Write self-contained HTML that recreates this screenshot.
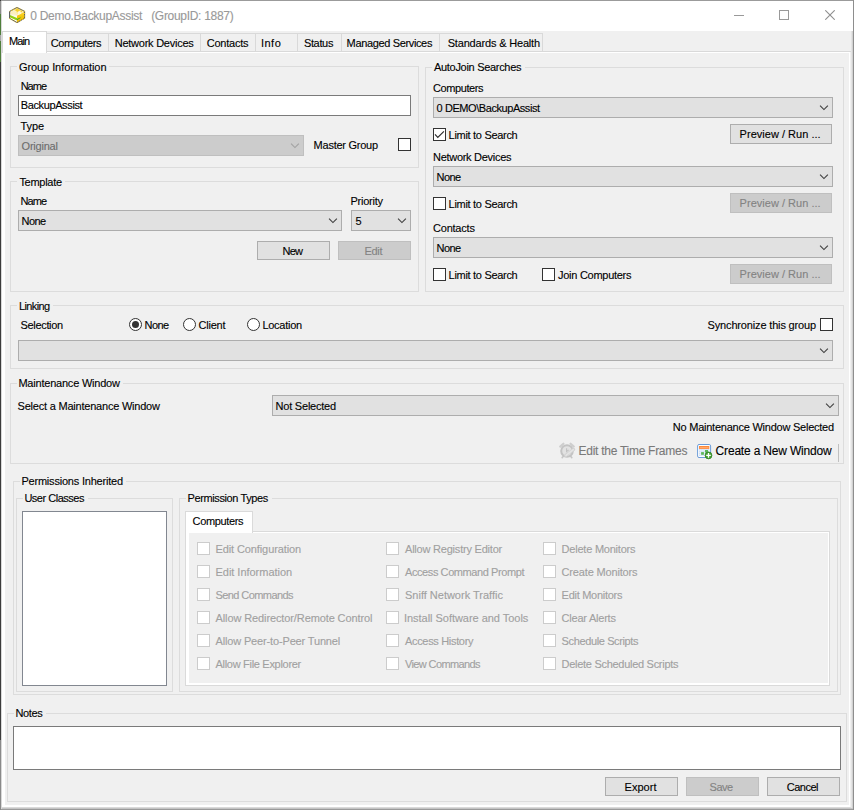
<!DOCTYPE html>
<html>
<head>
<meta charset="utf-8">
<title>0 Demo.BackupAssist (GroupID: 1887)</title>
<style>
html,body{margin:0;padding:0;}
body{width:854px;height:810px;overflow:hidden;position:relative;background:#f0f0f0;font-family:"Liberation Sans",sans-serif;font-size:11px;color:#000;}
.a{position:absolute;}
.t{position:absolute;white-space:pre;font-size:11px;line-height:13px;height:13px;-webkit-text-stroke:0.12px currentColor;}
.t.b{font-size:12px;line-height:16px;height:16px;}
.gb{position:absolute;border:1px solid #dcdcdc;box-sizing:border-box;}
.inp{position:absolute;box-sizing:border-box;background:#fff;border:1px solid #7a7a7a;}
.cb{position:absolute;box-sizing:border-box;height:21px;background:#e1e1e1;border:1px solid #adadad;}
.cb.dis{background:#cccccc;border-color:#bfbfbf;}
.ar{position:absolute;right:3px;top:7px;}
.btn{position:absolute;box-sizing:border-box;background:#e1e1e1;border:1px solid #adadad;}
.btn.dis{background:#cccccc;border-color:#bfbfbf;}
.ck{position:absolute;box-sizing:border-box;width:13px;height:13px;background:#fff;border:1px solid #333;}
.ck.dis{border-color:#cccccc;background:#fff;}
.rd{position:absolute;box-sizing:border-box;width:13px;height:13px;background:#fff;border:1px solid #333;border-radius:50%;}
.dot{position:absolute;left:2px;top:2px;width:7px;height:7px;border-radius:50%;background:#333;}
</style>
</head>
<body>
<!-- window chrome -->
<div class="a" style="left:0px;top:0px;width:854px;height:810px;background:#f0f0f0;"></div>
<div class="a" style="left:1px;top:1px;width:852px;height:30px;background:#fff;"></div>
<div class="a" style="left:0px;top:0px;width:854px;height:1px;background:#9b9b9b;"></div>
<svg class="a" style="left:4px;top:4px;" width="30" height="24" viewBox="4 4 30 24">
<defs>
<linearGradient id="lf" x1="0" y1="0" x2="0" y2="1"><stop offset="0" stop-color="#f7e3a4"/><stop offset="0.45" stop-color="#fffbee"/><stop offset="1" stop-color="#ffffff"/></linearGradient>
<linearGradient id="rf" x1="0" y1="0" x2="0" y2="1"><stop offset="0" stop-color="#fbd84a"/><stop offset="0.45" stop-color="#f9c707"/><stop offset="1" stop-color="#f5bc00"/></linearGradient>
</defs>
<polygon points="17,7.5 24.6,11.4 24.6,18.3 17,22.6 9.6,18.3 9.6,11.4" fill="#fdf2c4"/>
<polygon points="9.7,11.6 17,15.4 17,22.4 9.7,18.2" fill="url(#lf)"/>
<polygon points="17,15.4 24.6,11.6 24.6,18.2 17,22.4" fill="url(#rf)"/>
<polygon points="17,7.8 24.4,11.5 17,15.4 9.6,11.5" fill="#fdf0bd"/>
<polygon points="14.5,10 17.5,8.6 20.6,10.4 22.6,11.6 17.3,14.6 16.6,11.2" fill="#f7d12c"/>
<polygon points="17.3,12 20.2,10.6 21.4,13.8 17.3,15.2" fill="#fff6d8"/>
<polygon points="9.9,15.0 17,18.1 17,20.4 9.9,17.2" fill="#93d012"/>
<polygon points="17,18.2 24.2,15.0 24.2,16.0 17,20.2" fill="#e8c81a"/>
<polygon points="17,19.0 20.6,17.3 20.6,18.0 17,20.2" fill="#34b51c"/>
<polygon points="17,7.5 24.6,11.4 24.6,18.3 17,22.6 9.6,18.3 9.6,11.4" fill="none" stroke="#50535a" stroke-width="1"/>
<path d="M9.6 18.3 L17 22.6 L24.6 18.3 L24.6 11.4 L17 7.5 L9.6 11.4" fill="none" stroke="#f6c90f" stroke-width="1.05" stroke-dasharray="0.9 1.5"/>
</svg>
<div class="a" style="left:734px;top:15px;width:10px;height:1px;background:#999;"></div>
<div class="a" style="left:779px;top:10px;width:10px;height:10px;box-sizing:border-box;border:1px solid #999;"></div>
<svg class="a" style="left:825px;top:10px;" width="10" height="10" viewBox="0 0 10 10"><path d="M0.3 0.3 L9.7 9.7 M9.7 0.3 L0.3 9.7" stroke="#8f8f8f" stroke-width="1.1" fill="none"/></svg>
<!-- main tab control -->
<div class="a" style="left:1px;top:51px;width:851px;height:757px;background:#fff;box-sizing:border-box;border:1px solid #d9d9d9;"></div>
<div class="a" style="left:5px;top:53px;width:844px;height:752px;background:#f0f0f0;"></div>
<div class="a" style="left:850px;top:52px;width:1px;height:755px;background:#f0f0f0;"></div>
<div class="a" style="left:47px;top:33px;width:496px;height:1px;background:#d9d9d9;"></div>
<div class="a" style="left:108px;top:33px;width:1px;height:18px;background:#d9d9d9;"></div>
<div class="a" style="left:200px;top:33px;width:1px;height:18px;background:#d9d9d9;"></div>
<div class="a" style="left:255px;top:33px;width:1px;height:18px;background:#d9d9d9;"></div>
<div class="a" style="left:297px;top:33px;width:1px;height:18px;background:#d9d9d9;"></div>
<div class="a" style="left:341px;top:33px;width:1px;height:18px;background:#d9d9d9;"></div>
<div class="a" style="left:439px;top:33px;width:1px;height:18px;background:#d9d9d9;"></div>
<div class="a" style="left:542px;top:33px;width:1px;height:18px;background:#d9d9d9;"></div>
<div class="a" style="left:2px;top:31px;width:45px;height:22px;box-sizing:border-box;background:#fff;border:1px solid #d9d9d9;border-bottom:none;"></div>
<!-- group boxes -->
<div class="gb" style="left:10px;top:66px;width:409px;height:102px;"></div>
<div class="a" style="left:17px;top:66px;width:92px;height:1px;background:#f0f0f0;"></div>
<div class="gb" style="left:10px;top:181px;width:409px;height:111px;"></div>
<div class="a" style="left:17px;top:181px;width:48px;height:1px;background:#f0f0f0;"></div>
<div class="gb" style="left:425px;top:67px;width:419px;height:225px;"></div>
<div class="a" style="left:432px;top:67px;width:93px;height:1px;background:#f0f0f0;"></div>
<div class="gb" style="left:10px;top:305px;width:834px;height:64px;"></div>
<div class="a" style="left:17px;top:305px;width:36px;height:1px;background:#f0f0f0;"></div>
<div class="gb" style="left:10px;top:383px;width:834px;height:81px;"></div>
<div class="a" style="left:17px;top:383px;width:106px;height:1px;background:#f0f0f0;"></div>
<div class="gb" style="left:13px;top:481px;width:828px;height:214px;"></div>
<div class="a" style="left:20px;top:481px;width:106px;height:1px;background:#f0f0f0;"></div>
<div class="gb" style="left:16px;top:498px;width:157px;height:194px;"></div>
<div class="a" style="left:23px;top:498px;width:65px;height:1px;background:#f0f0f0;"></div>
<div class="gb" style="left:179px;top:498px;width:659px;height:194px;"></div>
<div class="a" style="left:186px;top:498px;width:86px;height:1px;background:#f0f0f0;"></div>
<div class="gb" style="left:7px;top:713px;width:840px;height:89px;"></div>
<div class="a" style="left:14px;top:713px;width:32px;height:1px;background:#f0f0f0;"></div>
<!-- controls -->
<div class="inp" style="left:18px;top:95px;width:393px;height:21px;"></div>
<div class="cb dis" style="left:18px;top:135px;width:286px;"><svg class="ar" width="10" height="6" viewBox="0 0 10 6"><path d="M1.05 0.66 L4.95 4.55 L8.87 0.66" stroke="#a2a2a2" stroke-width="1.15" fill="none"/></svg></div>
<div class="ck" style="left:398px;top:138px;"></div>
<div class="cb" style="left:18px;top:210px;width:324px;"><svg class="ar" width="10" height="6" viewBox="0 0 10 6"><path d="M1.05 0.66 L4.95 4.55 L8.87 0.66" stroke="#404040" stroke-width="1.15" fill="none"/></svg></div>
<div class="cb" style="left:351px;top:210px;width:60px;"><svg class="ar" width="10" height="6" viewBox="0 0 10 6"><path d="M1.05 0.66 L4.95 4.55 L8.87 0.66" stroke="#404040" stroke-width="1.15" fill="none"/></svg></div>
<div class="btn" style="left:257px;top:241px;width:73px;height:19px;"></div>
<div class="btn dis" style="left:338px;top:241px;width:73px;height:19px;"></div>
<div class="cb" style="left:433px;top:97px;width:400px;"><svg class="ar" width="10" height="6" viewBox="0 0 10 6"><path d="M1.05 0.66 L4.95 4.55 L8.87 0.66" stroke="#404040" stroke-width="1.15" fill="none"/></svg></div>
<div class="ck" style="left:433px;top:128px;"><svg class="a" style="left:0;top:0" width="11" height="11" viewBox="0 0 11 11"><path d="M1.0 5.4 L3.8 8.4 L9.9 2.4" stroke="#2e2e2e" stroke-width="1.2" fill="none"/></svg></div>
<div class="btn" style="left:730px;top:124px;width:102px;height:20px;"></div>
<div class="cb" style="left:433px;top:166px;width:400px;"><svg class="ar" width="10" height="6" viewBox="0 0 10 6"><path d="M1.05 0.66 L4.95 4.55 L8.87 0.66" stroke="#404040" stroke-width="1.15" fill="none"/></svg></div>
<div class="ck" style="left:433px;top:197px;"></div>
<div class="btn dis" style="left:730px;top:193px;width:102px;height:20px;"></div>
<div class="cb" style="left:433px;top:237px;width:400px;"><svg class="ar" width="10" height="6" viewBox="0 0 10 6"><path d="M1.05 0.66 L4.95 4.55 L8.87 0.66" stroke="#404040" stroke-width="1.15" fill="none"/></svg></div>
<div class="ck" style="left:433px;top:268px;"></div>
<div class="ck" style="left:542px;top:268px;"></div>
<div class="btn dis" style="left:730px;top:264px;width:102px;height:20px;"></div>
<div class="rd" style="left:129px;top:318px;"><div class="dot"></div></div>
<div class="rd" style="left:183px;top:318px;"></div>
<div class="rd" style="left:247px;top:318px;"></div>
<div class="ck" style="left:820px;top:318px;"></div>
<div class="cb" style="left:18px;top:340px;width:815px;"><svg class="ar" width="10" height="6" viewBox="0 0 10 6"><path d="M1.05 0.66 L4.95 4.55 L8.87 0.66" stroke="#404040" stroke-width="1.15" fill="none"/></svg></div>
<div class="cb" style="left:272px;top:395px;width:567px;"><svg class="ar" width="10" height="6" viewBox="0 0 10 6"><path d="M1.05 0.66 L4.95 4.55 L8.87 0.66" stroke="#404040" stroke-width="1.15" fill="none"/></svg></div>
<div class="a" style="left:838px;top:444px;width:1px;height:18px;background:#c0c0c0;"></div>
<svg class="a" style="left:555px;top:440px;" width="24" height="22" viewBox="555 440 24 22">
<path d="M560.2 446.6 L563.4 443.7 M573.8 446.6 L570.6 443.7" stroke="#cecece" stroke-width="2.2" stroke-linecap="round" fill="none"/>
<path d="M562.2 457.6 L563.6 456 M571.8 457.6 L570.4 456" stroke="#c6c6c6" stroke-width="1.6" stroke-linecap="round"/>
<circle cx="567" cy="451" r="5.8" fill="#e2e2e2" stroke="#c3c3c3" stroke-width="2"/>
<path d="M566.6 448.2 V451.6 L568.6 449.8" stroke="#c2c2c2" stroke-width="1.1" fill="none"/>
<path d="M565.6 455.6 L573.6 449.4" stroke="#d2d2d2" stroke-width="3.2" stroke-linecap="round"/>
<path d="M566 455.3 L573.3 449.7" stroke="#e4e4e4" stroke-width="1.6" stroke-linecap="round"/>
</svg>
<svg class="a" style="left:692px;top:440px;" width="24" height="22" viewBox="692 440 24 22">
<rect x="697.6" y="444.5" width="13" height="13" rx="1.4" fill="#ffffff" stroke="#6c9cd8" stroke-width="1"/>
<rect x="699" y="449" width="10.4" height="7" fill="#cfe0f6"/>
<path d="M699 450.6 H709.4 M699 452.6 H709.4 M699 454.6 H709.4" stroke="#f4f8fd" stroke-width="0.55"/>
<path d="M700.8 449 V456 M702.9 449 V456 M705 449 V456 M707.1 449 V456" stroke="#f4f8fd" stroke-width="0.55"/>
<rect x="699" y="446" width="10.3" height="2.9" fill="#ff8a3c"/>
<rect x="699.8" y="447" width="8.6" height="0.8" fill="#ffb27a"/>
<rect x="705" y="450" width="3" height="2.6" fill="#5cb75a"/>
<rect x="701.1" y="452.1" width="2.8" height="2.7" fill="#5cb75a"/>
<circle cx="708.5" cy="455.4" r="3.4" fill="#46a532" stroke="#2f7d22" stroke-width="0.8"/>
<path d="M708.5 453.1 V457.7 M706.2 455.4 H710.8" stroke="#ffffff" stroke-width="1.3"/>
</svg>
<div class="a" style="left:22px;top:511px;width:145px;height:175px;box-sizing:border-box;background:#fff;border:1px solid #828790;"></div>
<div class="a" style="left:185px;top:531px;width:645px;height:155px;background:#fff;box-sizing:border-box;border:1px solid #dadada;"></div>
<div class="a" style="left:189px;top:533px;width:639px;height:150px;background:#f0f0f0;"></div>
<div class="a" style="left:185px;top:511px;width:68px;height:22px;box-sizing:border-box;background:#fff;border:1px solid #dadada;border-bottom:none;"></div>
<div class="ck dis" style="left:197px;top:542px;"></div>
<div class="ck dis" style="left:197px;top:565px;"></div>
<div class="ck dis" style="left:197px;top:588px;"></div>
<div class="ck dis" style="left:197px;top:611px;"></div>
<div class="ck dis" style="left:197px;top:634px;"></div>
<div class="ck dis" style="left:197px;top:657px;"></div>
<div class="ck dis" style="left:386px;top:542px;"></div>
<div class="ck dis" style="left:386px;top:565px;"></div>
<div class="ck dis" style="left:386px;top:588px;"></div>
<div class="ck dis" style="left:386px;top:611px;"></div>
<div class="ck dis" style="left:386px;top:634px;"></div>
<div class="ck dis" style="left:386px;top:657px;"></div>
<div class="ck dis" style="left:543px;top:542px;"></div>
<div class="ck dis" style="left:543px;top:565px;"></div>
<div class="ck dis" style="left:543px;top:588px;"></div>
<div class="ck dis" style="left:543px;top:611px;"></div>
<div class="ck dis" style="left:543px;top:634px;"></div>
<div class="ck dis" style="left:543px;top:657px;"></div>
<div class="inp" style="left:13px;top:726px;width:828px;height:44px;"></div>
<div class="btn" style="left:605px;top:777px;width:73px;height:19px;"></div>
<div class="btn dis" style="left:686px;top:777px;width:73px;height:19px;"></div>
<div class="btn" style="left:767px;top:777px;width:73px;height:19px;"></div>
<div class="a" style="left:0px;top:808px;width:854px;height:1px;background:#c4c4c4;"></div>
<div class="a" style="left:0px;top:809px;width:854px;height:1px;background:#9a9a9a;"></div>
<div class="a" style="left:0px;top:0px;width:1px;height:810px;background:#3c3c3c;"></div>
<div class="a" style="left:0px;top:1px;width:1px;height:13px;background:#8a8a8a;"></div>
<div class="a" style="left:0px;top:14px;width:1px;height:48px;background:#4f7f3b;"></div>
<div class="a" style="left:0px;top:35px;width:1px;height:6px;background:#a8a8a8;"></div>
<div class="a" style="left:0px;top:740px;width:1px;height:70px;background:#8a8a8a;"></div>
<div class="a" style="left:1px;top:1px;width:1px;height:808px;background:#d8d8d8;"></div>
<div class="a" style="left:851px;top:31px;width:1px;height:777px;background:#e4e4e4;"></div>
<div class="a" style="left:852px;top:31px;width:1px;height:777px;background:#d2d2d2;"></div>
<div class="a" style="left:853px;top:0px;width:1px;height:810px;background:#8e8e8e;"></div>
<!-- text -->
<div class="t b" style="left:30.30px;top:8px;letter-spacing:-0.297px;color:#999999;">0 Demo.BackupAssist   (GroupID: 1887)</div>
<div class="t" style="left:8.90px;top:35px;letter-spacing:-0.875px;">Main</div>
<div class="t" style="left:50.70px;top:37px;letter-spacing:-0.375px;">Computers</div>
<div class="t" style="left:114.70px;top:37px;letter-spacing:-0.244px;">Network Devices</div>
<div class="t" style="left:206.80px;top:37px;letter-spacing:-0.244px;">Contacts</div>
<div class="t" style="left:260.90px;top:37px;letter-spacing:0.523px;">Info</div>
<div class="t" style="left:303.90px;top:37px;letter-spacing:-0.337px;">Status</div>
<div class="t" style="left:346.60px;top:37px;letter-spacing:-0.354px;">Managed Services</div>
<div class="t" style="left:447.70px;top:37px;letter-spacing:-0.175px;">Standards &amp; Health</div>
<div class="t" style="left:18.90px;top:61px;letter-spacing:-0.065px;">Group Information</div>
<div class="t" style="left:20.70px;top:80px;letter-spacing:-1.008px;">Name</div>
<div class="t" style="left:20.70px;top:99px;letter-spacing:-0.370px;">BackupAssist</div>
<div class="t" style="left:20.60px;top:120px;letter-spacing:-0.110px;">Type</div>
<div class="t" style="left:21.60px;top:140px;letter-spacing:-0.237px;color:#6d6d6d;">Original</div>
<div class="t" style="left:313.60px;top:139px;letter-spacing:-0.248px;">Master Group</div>
<div class="t" style="left:19.40px;top:176px;letter-spacing:-0.274px;">Template</div>
<div class="t" style="left:20.60px;top:195px;letter-spacing:-0.942px;">Name</div>
<div class="t" style="left:350.40px;top:195px;letter-spacing:-0.218px;">Priority</div>
<div class="t" style="left:21.60px;top:215px;letter-spacing:-0.593px;">None</div>
<div class="t" style="left:355.60px;top:215px;letter-spacing:0.000px;">5</div>
<div class="t" style="left:282.60px;top:245px;letter-spacing:-0.831px;">New</div>
<div class="t" style="left:364.60px;top:245px;letter-spacing:-0.366px;color:#838383;">Edit</div>
<div class="t" style="left:434.00px;top:61px;letter-spacing:-0.302px;">AutoJoin Searches</div>
<div class="t" style="left:433.00px;top:82px;letter-spacing:-0.412px;">Computers</div>
<div class="t" style="left:436.60px;top:102px;letter-spacing:-0.433px;">0 DEMO\BackupAssist</div>
<div class="t" style="left:448.60px;top:129px;letter-spacing:-0.303px;">Limit to Search</div>
<div class="t" style="left:739.60px;top:128px;letter-spacing:0.023px;">Preview / Run ...</div>
<div class="t" style="left:433.00px;top:151px;letter-spacing:-0.287px;">Network Devices</div>
<div class="t" style="left:436.60px;top:171px;letter-spacing:-0.593px;">None</div>
<div class="t" style="left:448.60px;top:198px;letter-spacing:-0.303px;">Limit to Search</div>
<div class="t" style="left:739.60px;top:197px;letter-spacing:0.023px;color:#838383;">Preview / Run ...</div>
<div class="t" style="left:433.00px;top:222px;letter-spacing:-0.216px;">Contacts</div>
<div class="t" style="left:436.60px;top:242px;letter-spacing:-0.593px;">None</div>
<div class="t" style="left:448.60px;top:269px;letter-spacing:-0.303px;">Limit to Search</div>
<div class="t" style="left:558.00px;top:269px;letter-spacing:-0.272px;">Join Computers</div>
<div class="t" style="left:739.60px;top:268px;letter-spacing:0.023px;color:#838383;">Preview / Run ...</div>
<div class="t" style="left:19.00px;top:300px;letter-spacing:-0.623px;">Linking</div>
<div class="t" style="left:20.60px;top:319px;letter-spacing:-0.342px;">Selection</div>
<div class="t" style="left:144.60px;top:319px;letter-spacing:-0.593px;">None</div>
<div class="t" style="left:198.60px;top:319px;letter-spacing:-0.253px;">Client</div>
<div class="t" style="left:262.40px;top:319px;letter-spacing:-0.267px;">Location</div>
<div class="t" style="left:707.60px;top:319px;letter-spacing:-0.161px;">Synchronize this group</div>
<div class="t" style="left:18.40px;top:377px;letter-spacing:-0.213px;">Maintenance Window</div>
<div class="t" style="left:17.60px;top:400px;letter-spacing:-0.216px;">Select a Maintenance Window</div>
<div class="t" style="left:275.60px;top:400px;letter-spacing:-0.224px;">Not Selected</div>
<div class="t" style="left:672.80px;top:421px;letter-spacing:-0.236px;">No Maintenance Window Selected</div>
<div class="t b" style="left:578.60px;top:443px;letter-spacing:-0.276px;color:#7a7a7a;">Edit the Time Frames</div>
<div class="t b" style="left:715.60px;top:443px;letter-spacing:-0.184px;">Create a New Window</div>
<div class="t" style="left:21.40px;top:475px;letter-spacing:-0.202px;">Permissions Inherited</div>
<div class="t" style="left:24.40px;top:492px;letter-spacing:-0.482px;">User Classes</div>
<div class="t" style="left:187.60px;top:492px;letter-spacing:-0.394px;">Permission Types</div>
<div class="t" style="left:192.60px;top:515px;letter-spacing:-0.362px;">Computers</div>
<div class="t" style="left:215.50px;top:543px;letter-spacing:-0.107px;color:#a0a0a0;">Edit Configuration</div>
<div class="t" style="left:215.50px;top:566px;letter-spacing:-0.028px;color:#a0a0a0;">Edit Information</div>
<div class="t" style="left:215.50px;top:589px;letter-spacing:-0.582px;color:#a0a0a0;">Send Commands</div>
<div class="t" style="left:215.50px;top:612px;letter-spacing:-0.108px;color:#a0a0a0;">Allow Redirector/Remote Control</div>
<div class="t" style="left:215.50px;top:635px;letter-spacing:-0.152px;color:#a0a0a0;">Allow Peer-to-Peer Tunnel</div>
<div class="t" style="left:215.50px;top:658px;letter-spacing:-0.296px;color:#a0a0a0;">Allow File Explorer</div>
<div class="t" style="left:405.00px;top:543px;letter-spacing:-0.211px;color:#a0a0a0;">Allow Registry Editor</div>
<div class="t" style="left:405.00px;top:566px;letter-spacing:-0.415px;color:#a0a0a0;">Access Command Prompt</div>
<div class="t" style="left:405.00px;top:589px;letter-spacing:-0.006px;color:#a0a0a0;">Sniff Network Traffic</div>
<div class="t" style="left:404.00px;top:612px;letter-spacing:-0.034px;color:#a0a0a0;">Install Software and Tools</div>
<div class="t" style="left:405.00px;top:635px;letter-spacing:-0.326px;color:#a0a0a0;">Access History</div>
<div class="t" style="left:405.00px;top:658px;letter-spacing:-0.620px;color:#a0a0a0;">View Commands</div>
<div class="t" style="left:561.60px;top:543px;letter-spacing:-0.224px;color:#a0a0a0;">Delete Monitors</div>
<div class="t" style="left:561.60px;top:566px;letter-spacing:-0.168px;color:#a0a0a0;">Create Monitors</div>
<div class="t" style="left:561.60px;top:589px;letter-spacing:-0.274px;color:#a0a0a0;">Edit Monitors</div>
<div class="t" style="left:561.60px;top:612px;letter-spacing:-0.233px;color:#a0a0a0;">Clear Alerts</div>
<div class="t" style="left:561.60px;top:635px;letter-spacing:-0.376px;color:#a0a0a0;">Schedule Scripts</div>
<div class="t" style="left:561.60px;top:658px;letter-spacing:-0.288px;color:#a0a0a0;">Delete Scheduled Scripts</div>
<div class="t" style="left:15.40px;top:707px;letter-spacing:-0.334px;">Notes</div>
<div class="t" style="left:624.60px;top:781px;letter-spacing:0.013px;">Export</div>
<div class="t" style="left:709.60px;top:781px;letter-spacing:-0.518px;color:#838383;">Save</div>
<div class="t" style="left:786.70px;top:781px;letter-spacing:-0.479px;">Cancel</div>
</body>
</html>
